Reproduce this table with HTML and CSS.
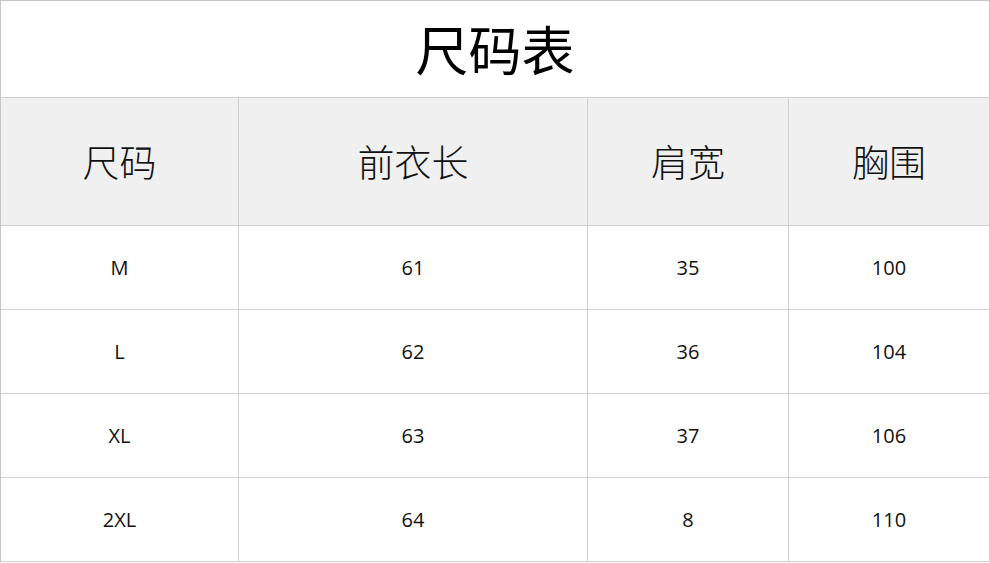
FILE: index.html
```html
<!DOCTYPE html>
<html lang="zh">
<head>
<meta charset="utf-8">
<title>尺码表</title>
<link rel="stylesheet" href="styles.css">
</head>
<body>
<div class="sheet">
  <div class="cell title">尺码表</div>
  <div class="cell head">尺码</div>
  <div class="cell head">前衣长</div>
  <div class="cell head">肩宽</div>
  <div class="cell head">胸围</div>
  <div class="cell">M</div><div class="cell">61</div><div class="cell">35</div><div class="cell">100</div>
  <div class="cell">L</div><div class="cell">62</div><div class="cell">36</div><div class="cell">104</div>
  <div class="cell">XL</div><div class="cell">63</div><div class="cell">37</div><div class="cell">106</div>
  <div class="cell">2XL</div><div class="cell">64</div><div class="cell">8</div><div class="cell">110</div>
</div>
</body>
</html>
```
FILE: styles.css
```css
html, body {
  margin: 0;
  padding: 0;
  background: #ffffff;
}
.sheet {
  width: 990px;
  box-sizing: border-box;
  display: grid;
  grid-template-columns: 238px 349px 201px 201px;
  grid-template-rows: 97px 128px 84px 84px 84px 84px;
  border-left: 1px solid #c6c6c6;
  border-top: 1px solid #c6c6c6;
  font-family: "Open Sans", "Noto Sans CJK SC", sans-serif;
  color: #111111;
}
.cell {
  box-sizing: border-box;
  border-right: 1px solid #d0d0d0;
  border-bottom: 1px solid #d0d0d0;
  display: flex;
  align-items: center;
  justify-content: center;
  font-size: 20px;
  padding-bottom: 1px;
}
.title {
  grid-column: 1 / -1;
  font-family: "Noto Sans CJK SC", sans-serif;
  font-size: 53px;
  color: #000000;
  border-right-color: #c6c6c6;
  padding-bottom: 3px;
}
.head {
  background: #f0f0f0;
  font-family: "Noto Sans CJK SC", sans-serif;
  font-size: 37px;
  font-weight: 300;
  color: #111111;
}
```
